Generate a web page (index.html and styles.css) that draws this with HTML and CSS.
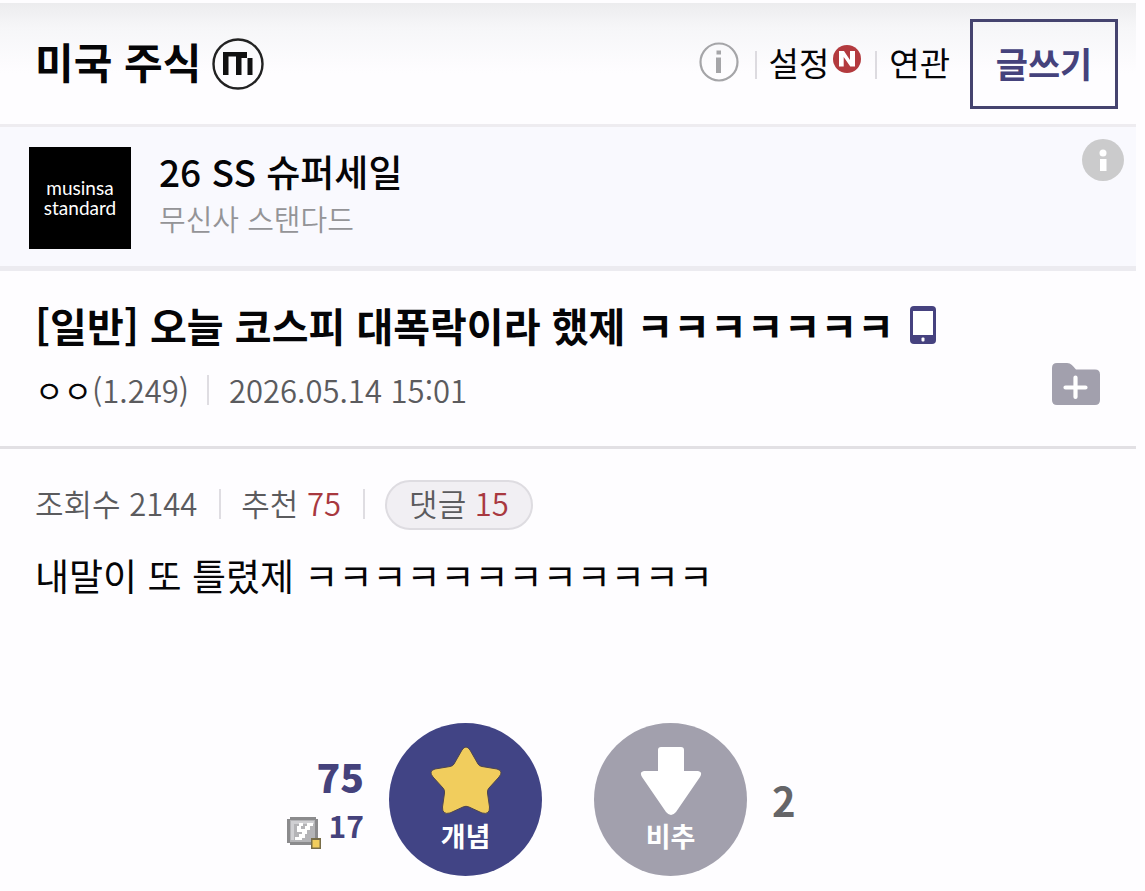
FILE: index.html
```html
<!DOCTYPE html>
<html lang="ko">
<head>
    <meta charset="utf-8">
    <meta name="viewport" content="width=device-width, initial-scale=1">
    <title>미국 주식</title>
    <link rel="stylesheet" href="styles.css">
</head>
<body>
    <div class="page">
        <!-- Gallery header -->
        <header class="gallery-header">
            <h1 class="gallery-title">
                <a href="#">미국 주식</a>
                <svg class="minor-icon" viewBox="0 0 52 52" aria-hidden="true">
                    <circle cx="26" cy="26" r="24.500" fill="none" stroke="#222" stroke-width="2.400"/>
                    <path d="M11 14H35V18.500H29.500V37H24V18.500H16.500V37H11ZM35.500 20H40.500V37H35.500ZM29.500 18H35V20H29.500Z" fill="#111"/>
                </svg>
            </h1>
            <nav class="gallery-menu">
                <a class="info-link" href="#" aria-label="정보">
                    <svg viewBox="0 0 40 40">
                        <circle cx="20" cy="20" r="18.500" fill="none" stroke="#a5a5a8" stroke-width="2.200"/>
                        <path d="M17.500 8.500h4.500v4h-4.500zM17 15.500h5V31h-5z" fill="#a5a5a8"/>
                    </svg>
                </a>
                <a class="menu-item" href="#">설정
                    <svg class="new-icon" viewBox="0 0 28 28" aria-hidden="true">
                        <circle cx="14" cy="14" r="14" fill="#b33a3e"/>
                        <path d="M6 21.500V6H11L17 15V6H22V21.500H17.300L10.700 12V21.500Z" fill="#fff"/>
                    </svg>
                </a>
                <a class="menu-item" href="#">연관</a>
                <button class="write-button" type="button">글쓰기</button>
            </nav>
        </header>

        <!-- Ad -->
        <section class="ad">
            <a class="ad-logo" href="#">musinsa<br>standard</a>
            <div class="ad-text">
                <a class="ad-title" href="#">26 SS 슈퍼세일</a>
                <span class="ad-brand">무신사 스탠다드</span>
            </div>
            <button class="ad-info" type="button" aria-label="광고 정보">
                <svg viewBox="0 0 42 42">
                    <circle cx="21" cy="21" r="21" fill="#cbcbcc"/>
                    <circle cx="21" cy="14" r="3.500" fill="#fff"/>
                    <path d="M18 20h6.500v12H18z" fill="#fff"/>
                </svg>
            </button>
        </section>

        <!-- Post title -->
        <section class="post-head">
            <div>
                <h2 class="post-title">
                    [일반] 오늘 코스피 대폭락이라 했제 ㅋㅋㅋㅋㅋㅋㅋ
                    <svg class="phone-icon" viewBox="0 0 26 38" aria-hidden="true">
                        <rect width="26" height="38" rx="4" fill="#46427f"/>
                        <path d="M3 5h20v24H3z" fill="#fff"/>
                        <rect x="11.500" y="31.500" width="3" height="4" rx="1" fill="#fff"/>
                    </svg>
                </h2>
                <div class="post-meta">
                    <span class="meta-part"><span class="nick">ㅇㅇ</span>(1.249)</span>
                    <span class="meta-part">2026.05.14 15:01</span>
                </div>
            </div>
            <button class="scrap-button" type="button" aria-label="스크랩">
                <svg viewBox="0 0 48 42">
                    <path d="M5 0H15C19 0 21 3 24 6.500H43Q48 6.500 48 11.500V37Q48 42 43 42H5Q0 42 0 37V5Q0 0 5 0Z" fill="#a2a0ad"/>
                    <path d="M23.500 14.500V34M13.500 24.500H33.500" stroke="#fff" stroke-width="4.200" stroke-linecap="round"/>
                </svg>
            </button>
        </section>

        <!-- Post body -->
        <main class="post-body">
            <div class="post-stats">
                <span class="stat">조회수 2144</span>
                <span class="stat">추천 <em>75</em></span>
                <a class="comment-link" href="#">댓글 <em>15</em></a>
            </div>
            <p class="post-text">내말이 또 틀렸제 ㅋㅋㅋㅋㅋㅋㅋㅋㅋㅋㅋㅋ</p>

            <div class="votes">
                <div class="up-count">
                    <strong>75</strong>
                    <span class="fixed-count">
                        <svg viewBox="0 0 34 32" aria-hidden="true">
                            <path d="M3 0H29V2H31V26H29V28H3V26H0V2H3Z" fill="#8b8b8d"/>
                            <path d="M3 3H28V25H3Z" fill="#b4b4b7"/>
                            <path d="M4 4H27V7H4ZM4 7H7V23H4Z" fill="#d0d0d3"/>
                            <path d="M12 6H16V9H14V12H18V9H20V6H26V9H23V13H20V17H18V21H15V23H8V20H12V17H15V15H10V9H12Z" fill="#fff"/>
                            <path d="M24 21H34V32H24Z" fill="#786d48"/>
                            <path d="M25.500 23H32.500V30.500H25.500Z" fill="#f1cd5d"/>
                        </svg>
                        17
                    </span>
                </div>
                <button class="vote-button up" type="button">
                    <svg viewBox="0 0 72 70" aria-hidden="true">
                        <path d="M32 4Q36 -2 40 4L48 18Q49 20 52 20.500L67 23Q74 25 69 31L59 42Q57 44 57.500 47L59.500 61Q60 69 52 67L39 61Q36 59.500 33 61L20 67Q12 69 12.500 61L14.500 47Q15 44 13 42L3 31Q-2 25 5 23L20 20.500Q23 20 24 18Z" fill="#f1cd5d" stroke="#4d454f" stroke-width="1"/>
                    </svg>
                    개념
                </button>
                <button class="vote-button down" type="button">
                    <svg viewBox="0 0 72 70" aria-hidden="true">
                        <path d="M26 1H46Q49 1 49 4V25H63Q68 26 65 31L41 66Q36 72 31 66L7 31Q4 26 9 25H23V4Q23 1 26 1Z" fill="#fff"/>
                    </svg>
                    비추
                </button>
                <span class="down-count">2</span>
            </div>
        </main>
    </div>
</body>
</html>
```
FILE: styles.css
```css
* {
    box-sizing: border-box;
}

body {
    margin: 0;
    background: #fefdff;
    color: #050507;
    font-family: "Noto Sans CJK KR", sans-serif;
}

a {
    color: inherit;
    text-decoration: none;
}

button {
    font-family: inherit;
    border: none;
    background: none;
    padding: 0;
    cursor: pointer;
}

svg {
    display: block;
}

em {
    font-style: normal;
    color: #a8383f;
}

.page {
    padding: 3px 9px 0 0;
}

/* Header */
.gallery-header {
    display: flex;
    justify-content: space-between;
    align-items: flex-start;
    height: 124px;
    padding: 16px 18px 0 35px;
    border-bottom: 3px solid #eeecf0;
    background: linear-gradient(#ececee, #f6f6f8 24px, #fefdff 70px);
}

.gallery-title {
    display: flex;
    align-items: center;
    gap: 11px;
    margin: 0;
    height: 90px;
    font-size: 42px;
    font-weight: 700;
    line-height: 60px;
}

.gallery-title a {
    padding-bottom: 6px;
}

.minor-icon {
    width: 52px;
    height: 52px;
}

.gallery-menu {
    display: flex;
    align-items: center;
    height: 90px;
    font-size: 33px;
    line-height: 42px;
}

.info-link svg {
    width: 40px;
    height: 40px;
}

.gallery-menu .info-link,
.menu-item {
    padding-bottom: 5px;
}

.menu-item {
    display: flex;
    gap: 4px;
    margin-left: 16px;
}

.menu-item::before {
    content: "";
    width: 2px;
    height: 28px;
    margin: 10px 8px 0 0;
    background: #dddbe0;
}

.menu-item + .menu-item {
    margin-left: 14px;
}

.new-icon {
    width: 28px;
    height: 28px;
    margin-top: 4px;
}

.write-button {
    width: 148px;
    height: 90px;
    margin-left: 20px;
    padding-bottom: 4px;
    border: 3px solid #45436f;
    color: #45427c;
    font-size: 35px;
    font-weight: 700;
}

/* Ad */
.ad {
    display: flex;
    padding: 20px 12px 17px 29px;
    border-bottom: 5px solid #ecebf0;
    background: #f9f9fe;
}

.ad-logo {
    width: 102px;
    height: 102px;
    padding-top: 31px;
    background: #000;
    color: #fff;
    font-family: Lato, sans-serif;
    font-size: 19px;
    line-height: 20px;
    text-align: center;
}

.ad-text {
    display: flex;
    flex-direction: column;
    flex: 1;
    margin-left: 28px;
}

.ad-title {
    font-size: 37px;
    font-weight: 500;
    line-height: 48px;
}

.ad-brand {
    color: #949497;
    font-size: 29px;
    font-weight: 350;
    line-height: 46px;
}

.ad-info {
    align-self: flex-start;
    margin-top: -8px;
}

.ad-info svg {
    width: 42px;
    height: 42px;
}

/* Post title */
.post-head {
    display: flex;
    justify-content: space-between;
    padding: 26px 36px 32px 35px;
    border-bottom: 3px solid #e2e0e4;
}

.post-title {
    display: flex;
    align-items: center;
    gap: 16px;
    margin: 0;
    font-size: 40px;
    font-weight: 700;
    line-height: 56px;
}

.phone-icon {
    width: 26px;
    height: 38px;
}

.post-meta {
    display: flex;
    align-items: center;
    margin-top: 13px;
    color: #5b5b5e;
    font-size: 31px;
    font-weight: 350;
    line-height: 48px;
}

.meta-part {
    display: flex;
}

.meta-part + .meta-part::before,
.stat::after {
    content: "";
    width: 2px;
    height: 30px;
    margin: 9px 20px 0 18px;
    background: #dfdde2;
}

.nick {
    color: #050507;
    font-weight: 400;
}

.scrap-button {
    align-self: flex-end;
    margin-bottom: 9px;
}

.scrap-button svg {
    width: 48px;
    height: 42px;
}

/* Post body */
.post-body {
    padding: 31px 35px;
}

.post-stats {
    display: flex;
    align-items: center;
    color: #5b5b5e;
    font-size: 31px;
    font-weight: 350;
    line-height: 46px;
}

.stat {
    display: flex;
    margin-top: -4px;
    white-space: pre;
}

.stat::after {
    margin-left: 22px;
}

.comment-link {
    height: 50px;
    padding: 0 22px;
    border: 2px solid #dedce1;
    border-radius: 25px;
    background: #f1eff3;
    line-height: 42px;
}

.post-text {
    margin: 18px 0 0;
    font-size: 37px;
    line-height: 54px;
}

.votes {
    display: flex;
    align-items: center;
    margin-top: 121px;
}

.up-count {
    display: flex;
    flex-direction: column;
    flex: 1;
    align-items: flex-end;
    margin-right: 25px;
    color: #45427c;
    font-weight: 700;
}

.up-count strong {
    font-size: 39px;
    line-height: 50px;
}

.fixed-count {
    display: flex;
    align-items: center;
    gap: 8px;
    font-size: 30px;
    line-height: 46px;
}

.fixed-count svg {
    width: 34px;
    height: 32px;
    margin-top: 16px;
}

.vote-button {
    display: flex;
    flex-direction: column;
    align-items: center;
    gap: 2px;
    width: 153px;
    height: 153px;
    padding-top: 23px;
    border-radius: 50%;
    color: #fff;
    font-size: 27px;
    font-weight: 700;
    line-height: 36px;
}

.vote-button svg {
    width: 72px;
    height: 70px;
}

.up {
    background: #414485;
}

.down {
    margin-left: 52px;
    background: #a2a0ad;
}

.down-count {
    flex: 1;
    margin-left: 25px;
    color: #656568;
    font-size: 40px;
    font-weight: 700;
}
```
